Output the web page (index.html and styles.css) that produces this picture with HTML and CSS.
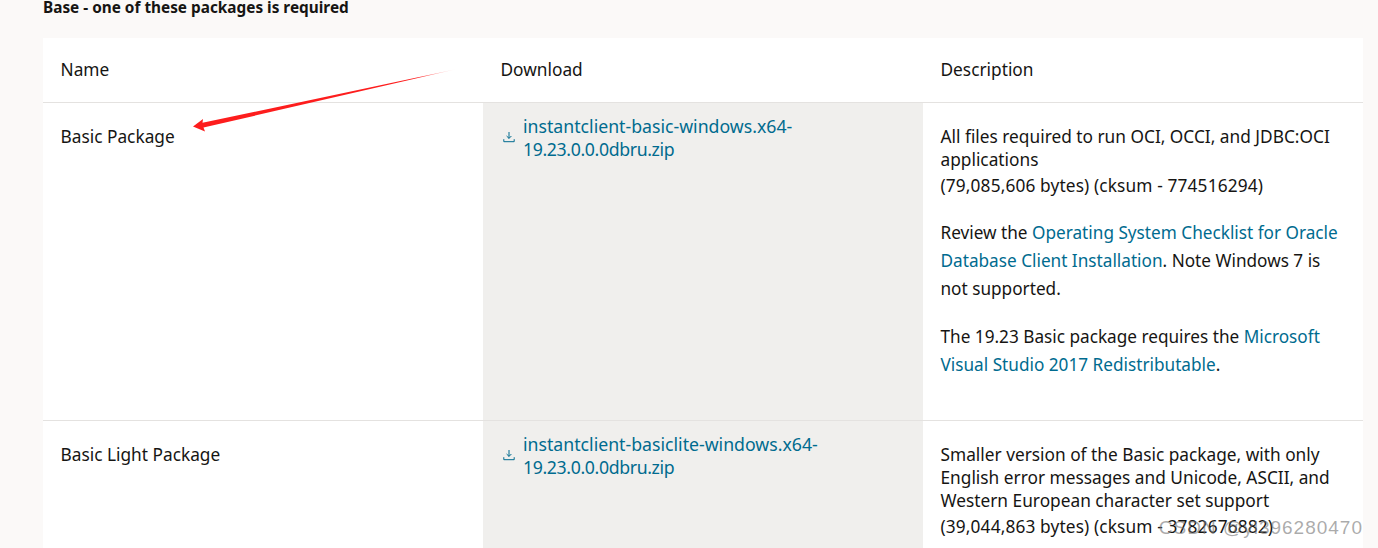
FILE: index.html
```html
<!DOCTYPE html>
<html lang="en">
<head>
<meta charset="utf-8">
<title>Instant Client Downloads</title>
<link rel="stylesheet" href="styles.css">
</head>
<body>
<main class="page">
  <h4 class="heading">Base - one of these packages is required</h4>
  <table class="packages">
    <thead>
      <tr><th>Name</th><th>Download</th><th>Description</th></tr>
    </thead>
    <tbody>
      <tr class="row-basic">
        <td class="name">Basic Package</td>
        <td class="dl">
          <div class="dl-link">
            <svg class="icon" viewBox="0 0 12 12" width="12" height="12" aria-hidden="true"><path d="M6 1V7.2M3.6 5 6 7.4 8.400 5M.8 8.200V10.700H11.200V8.200" fill="none" stroke="#006b8f" stroke-width="1"/></svg>
            <a href="#">instantclient-basic-windows.x64-<span class="build">19.23.0.0.0dbru.zip</span></a>
          </div>
        </td>
        <td class="desc">
          <div class="lead">All files required to run OCI, OCCI, and JDBC:OCI applications</div>
          <div class="size">(79,085,606 bytes) (cksum - 774516294)</div>
          <p>Review the <a href="#">Operating System Checklist for Oracle Database Client Installation</a>. Note Windows 7 is not supported.</p>
          <p>The 19.23 Basic package requires the <a href="#">Microsoft Visual Studio 2017 Redistributable</a>.</p>
        </td>
      </tr>
      <tr class="row-light">
        <td class="name">Basic Light Package</td>
        <td class="dl">
          <div class="dl-link">
            <svg class="icon" viewBox="0 0 12 12" width="12" height="12" aria-hidden="true"><path d="M6 1V7.2M3.6 5 6 7.4 8.400 5M.8 8.200V10.700H11.200V8.200" fill="none" stroke="#006b8f" stroke-width="1"/></svg>
            <a href="#">instantclient-basiclite-windows.x64-<span class="build">19.23.0.0.0dbru.zip</span></a>
          </div>
        </td>
        <td class="desc">
          <div class="lead">Smaller version of the Basic package, with only English error messages and Unicode, ASCII, and Western European character set support</div>
          <div class="size">(39,044,863 bytes) (cksum - 3782676882)</div>
        </td>
      </tr>
    </tbody>
  </table>
</main>
<svg class="arrow" viewBox="0 0 1378 548" width="1378" height="548" aria-hidden="true">
  <defs>
    <linearGradient id="fade" gradientUnits="userSpaceOnUse" x1="192" y1="126" x2="457" y2="69">
      <stop offset="0" stop-color="#fd1d1d"/>
      <stop offset="0.85" stop-color="#fd1d1d"/>
      <stop offset="1" stop-color="#fd1d1d" stop-opacity="0"/>
    </linearGradient>
  </defs>
  <path d="M193 126.500 203 119 202.500 122.800 457 69 203.500 127.500 205 131.500Z" fill="url(#fade)"/>
</svg>
<div class="watermark">CSDN @yl396280470</div>
</body>
</html>
```

FILE: styles.css
```css
html, body {
  margin: 0;
  height: 548px;
  overflow: hidden;
}
body {
  background: #fbf9f8;
  color: #161513;
  font-family: "Noto Sans", "Open Sans", sans-serif;
  position: relative;
}
.page {
  height: 548px;
  overflow: hidden;
  padding: 0 15px 0 43px;
}
.heading {
  margin: -5px 0 0;
  font-size: 15.35px;
  line-height: 24px;
  font-weight: 700;
  color: #161513;
}
.packages {
  margin-top: 19px;
  width: 1320px;
  table-layout: fixed;
  border-collapse: collapse;
  background: #fff;
  font-size: 17.3px;
}
th, td {
  padding: 0 17.5px;
  text-align: left;
  vertical-align: top;
  font-weight: 400;
}
th {
  height: 62px;
  padding-bottom: 2px;
  vertical-align: middle;
  border-bottom: 1px solid #e4e2e0;
}
.row-basic {
  height: 318px;
  border-bottom: 1px solid #e4e2e0;
}
.row-light {
  height: 200px;
}
.name {
  padding-top: 21px;
  line-height: 26px;
}
.dl {
  background: #f0efed;
  padding: 12px 20px;
  line-height: 23px;
  font-size: 17.7px;
}
.dl-link {
  display: flex;
  align-items: center;
  gap: 8px;
}
.build {
  letter-spacing: -0.37px;
}
.icon {
  flex: none;
  margin-top: -3px;
}
a {
  color: #006b8f;
  text-decoration: none;
}
.desc {
  padding-top: 22px;
}
.lead {
  line-height: 23px;
}
.size {
  line-height: 26px;
  margin-top: 2px;
  letter-spacing: 0.13px;
}
.desc p {
  margin: 20px 0 0;
  line-height: 28px;
  font-size: 17.2px;
}
.arrow {
  position: absolute;
  left: 0;
  top: 0;
  pointer-events: none;
}
.watermark {
  position: absolute;
  right: 15px;
  top: 516px;
  font-family: "Liberation Sans", sans-serif;
  font-size: 19px;
  letter-spacing: 1px;
  line-height: 24px;
  color: rgba(115, 115, 115, 0.6);
  pointer-events: none;
}
```
